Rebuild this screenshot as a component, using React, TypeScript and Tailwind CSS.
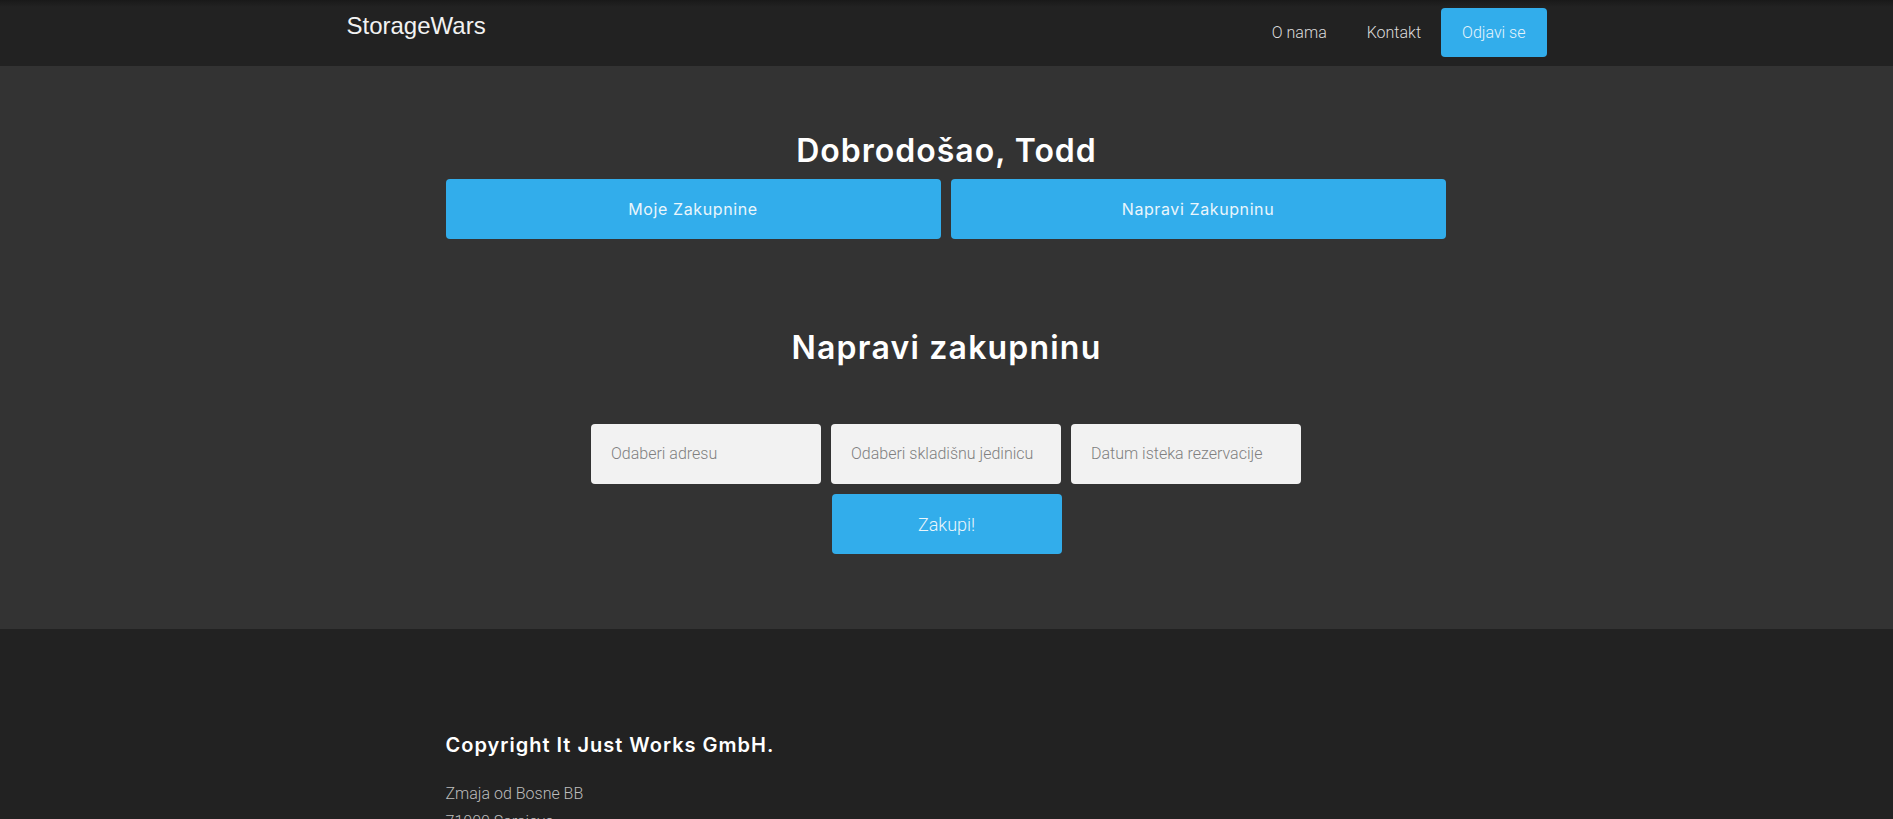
import React from "react";

const head = { fontFamily: "Inter, 'DejaVu Sans', sans-serif" };
const body = { fontFamily: "Roboto, 'Liberation Sans', sans-serif" };

export default function App() {
  return (
    <div className="min-h-screen w-full bg-[#222]" style={body}>
      <nav className="h-[66px] w-full bg-[linear-gradient(to_bottom,#191919_0px,#222_7px,#222_100%)]">
        <div className="mx-auto flex h-full w-[1200px] items-start justify-between">
          <div
            className="mt-[12px] text-[24px] leading-[28px] text-[#f2f2f2]"
            style={{ fontFamily: "'Liberation Sans', Arial, sans-serif" }}
          >
            StorageWars
          </div>
          <div className="mt-[8px] flex h-[49px] items-center">
            <a className="px-[20px] text-[16px] font-light text-[#dcdcdc]">O nama</a>
            <a className="px-[20px] text-[16px] font-light text-[#dcdcdc]">Kontakt</a>
            <a className="flex h-[49px] items-center rounded-[4px] bg-[#32adeb] px-[21px] text-[16px] font-light text-[#e6f4fb]">
              Odjavi se
            </a>
          </div>
        </div>
      </nav>

      <main className="w-full bg-[#333] pb-[75px] pt-[65px]">
        <h1
          className="text-center text-[32px] font-semibold leading-[40px] tracking-[1px] text-white"
          style={head}
        >
          Dobrodošao, Todd
        </h1>
        <div className="mx-auto mt-[8px] flex w-[1000px] -translate-x-[1px] gap-[10px]">
          <button
            className="flex h-[60px] flex-1 items-center justify-center rounded-[4px] bg-[#32adeb] text-[16px] tracking-[0.6px] text-[#eaf6fc]"
            style={head}
          >
            Moje Zakupnine
          </button>
          <button
            className="flex h-[60px] flex-1 items-center justify-center rounded-[4px] bg-[#32adeb] text-[16px] tracking-[0.6px] text-[#eaf6fc]"
            style={head}
          >
            Napravi Zakupninu
          </button>
        </div>

        <h2
          className="mt-[89px] text-center text-[32px] font-semibold leading-[40px] tracking-[1.2px] text-white"
          style={head}
        >
          Napravi zakupninu
        </h2>

        <div className="mx-auto mt-[56px] flex w-[711px] flex-col items-center gap-[10px]">
          <div className="flex w-full gap-[10px]">
            {["Odaberi adresu", "Odaberi skladišnu jedinicu", "Datum isteka rezervacije"].map((p) => (
              <div
                key={p}
                className="flex h-[60px] w-[230px] items-center rounded-[4px] bg-[#f2f2f2] px-[20px] text-[16px] font-light text-[#808080]"
              >
                {p}
              </div>
            ))}
          </div>
          <button className="flex h-[60px] w-[230px] items-center justify-center rounded-[4px] bg-[#32adeb] text-[18px] font-light text-[#eaf6fc]">
            Zakupi!
          </button>
        </div>
      </main>

      <footer className="w-full bg-[#222] pb-[40px] pt-[102px]">
        <div className="mx-auto w-[1000px] -translate-x-[1px]">
          <div className="text-[20px] font-semibold leading-[28px] tracking-[1px] text-white" style={head}>
            Copyright It Just Works GmbH.
          </div>
          <div className="mt-[21px] text-[16px] font-light leading-[28px] text-[#bdbdbd]">
            <div>Zmaja od Bosne BB</div>
            <div>71000 Sarajevo</div>
          </div>
        </div>
      </footer>
    </div>
  );
}
